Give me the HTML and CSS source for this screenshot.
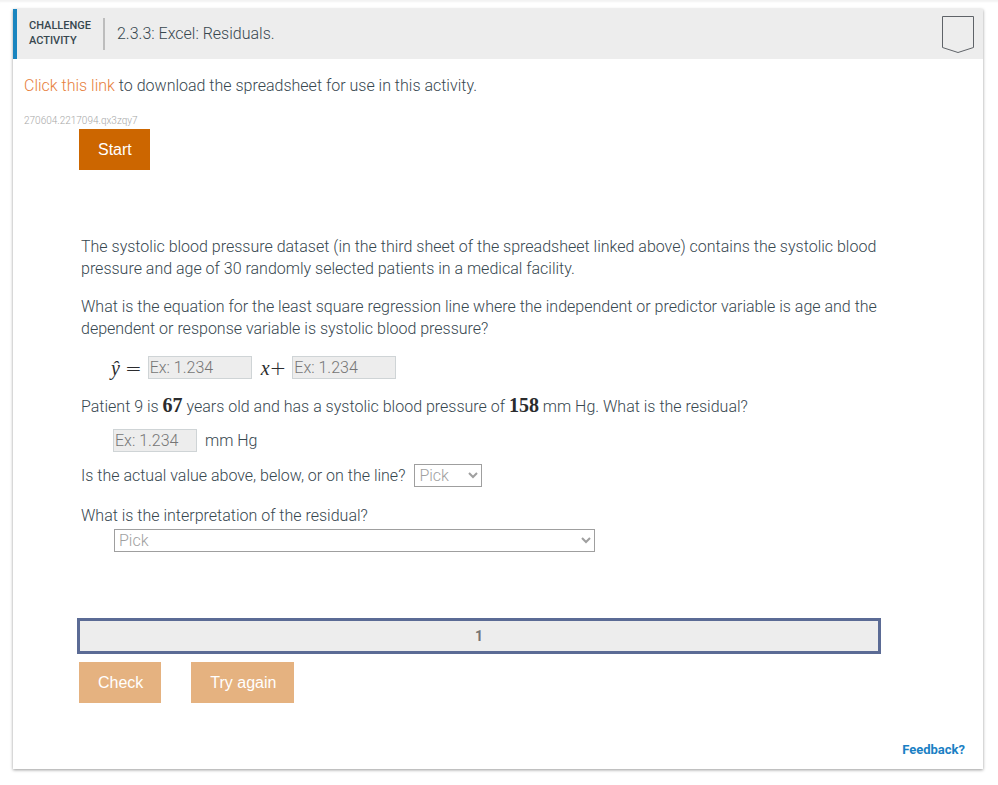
FILE: index.html
```html
<!DOCTYPE html>
<html lang="en">
<head>
    <meta charset="UTF-8">
    <meta name="viewport" content="width=device-width, initial-scale=1.0">
    <title>2.3.3: Excel: Residuals.</title>
    <link rel="stylesheet" href="styles.css">
</head>
<body>

<main class="activity">
    <header class="activity-header">
        <div class="activity-type">Challenge<br>activity</div>
        <h1 class="activity-title">2.3.3: Excel: Residuals.</h1>
        <svg class="chevron" width="34" height="38" viewBox="0 0 34 38" role="img" aria-label="Not completed">
            <path d="M1.5 1.5H32.5V32.5L17 37.5L1.5 32.5Z" fill="none" stroke="#5f6368" stroke-width="1"/>
        </svg>
    </header>

    <div class="activity-body">
        <p class="intro"><a href="#" class="download-link">Click this link</a> to download the spreadsheet for use in this activity.</p>
        <div class="activity-id">270604.2217094.qx3zqy7</div>

        <div class="tool">
            <div class="button-row">
                <button class="button" type="button">Start</button>
            </div>

            <div class="question">
                <p class="paragraph">The systolic blood pressure dataset (in the third sheet of the spreadsheet linked above) contains the systolic blood pressure and age of 30 randomly selected patients in a medical facility.</p>
                <p class="paragraph">What is the equation for the least square regression line where the independent or predictor variable is age and the dependent or response variable is systolic blood pressure?</p>

                <div class="row equation">
                    <label class="math" for="slope"><i>ŷ</i> <span class="operator">=</span></label>
                    <input class="answer" id="slope" type="text" placeholder="Ex: 1.234" disabled>
                    <label class="math term" for="intercept"><i>x</i><span class="operator">+</span></label>
                    <input class="answer" id="intercept" type="text" placeholder="Ex: 1.234" disabled>
                </div>

                <label class="prompt" for="residual">Patient 9 is <span class="math number">67</span> years old and has a systolic blood pressure of <span class="math number">158</span> mm Hg. What is the residual?</label>
                <div class="row residual">
                    <input class="answer short" id="residual" type="text" placeholder="Ex: 1.234" disabled>
                    <span>mm Hg</span>
                </div>

                <div class="row position">
                    <label for="position">Is the actual value above, below, or on the line?</label>
                    <select class="pick" id="position" disabled>
                        <option>Pick</option>
                    </select>
                </div>

                <label class="prompt" for="meaning">What is the interpretation of the residual?</label>
                <select class="pick wide" id="meaning" disabled>
                    <option>Pick</option>
                </select>
            </div>

            <div class="level">1</div>
            <div class="button-row">
                <button class="button" type="button" disabled>Check</button>
                <button class="button" type="button" disabled>Try again</button>
            </div>
        </div>

        <div class="footer">
            <a href="#" class="feedback">Feedback?</a>
        </div>
    </div>
</main>

</body>
</html>
```

FILE: styles.css
```css
* {
    box-sizing: border-box;
}

body {
    margin: 0;
    padding: 9px 15px 16px 13px;
    background: #fff;
    box-shadow: inset 0 3px 2px -1px #f3f3f3;
    color: #37474f;
    font-family: Roboto, sans-serif;
    font-size: 16px;
    font-weight: 300;
    line-height: 22px;
}

a {
    text-decoration: none;
}

.activity {
    background: #fff;
    box-shadow: 0 1px 3px rgba(0, 0, 0, 0.4);
}

.activity-header {
    display: flex;
    align-items: center;
    height: 50px;
    padding-right: 8px;
    border-left: 4px solid #1a85bf;
    background: #ededed;
}

.activity-type {
    padding: 0 12px 2px;
    border-right: 2px solid #bdbdbd;
    font-size: 11px;
    font-weight: 500;
    line-height: 15px;
    text-transform: uppercase;
}

.activity-title {
    flex: 1;
    margin: 0 12px;
    font-size: 16px;
    font-weight: 300;
}

.activity-body {
    padding: 16px 18px 8px 11px;
}

.intro {
    margin: 0 0 16px;
}

.download-link {
    color: #e7803c;
}

.activity-id {
    color: #a8a8a8;
    font-size: 10px;
    line-height: 16px;
}

.tool {
    max-width: 804px;
    margin-left: 53px;
}

.button-row {
    display: flex;
    gap: 30px;
    padding-left: 2px;
}

.button {
    height: 41px;
    padding: 0 18px 0 19px;
    border: none;
    background: #cc6600;
    color: #fff;
    font-family: "Liberation Sans", Arial, sans-serif;
    font-size: 16px;
    cursor: pointer;
}

.button:disabled {
    background: #e5b280;
    cursor: default;
}

.question {
    padding: 66px 4px;
}

.paragraph {
    margin: 0 0 16px;
}

.row {
    display: flex;
    align-items: center;
}

.equation {
    margin-bottom: 16px;
    padding-left: 30px;
}

.math {
    color: #2b2c2e;
    font-family: "Liberation Serif", serif;
    font-size: 20px;
    font-weight: 400;
    line-height: 20px;
}

.math.number {
    font-weight: 700;
}

.equation .math {
    margin-right: 6px;
}

.equation .term {
    margin-left: 9px;
}

.operator {
    font-family: "DejaVu Sans", sans-serif;
    font-weight: 200;
}

.answer {
    width: 104px;
    height: 23px;
    padding: 0 1px;
    border: 1px solid #cfd4d6;
    background: #ededed;
    font: inherit;
}

.answer::placeholder {
    color: #757575;
}

.short {
    width: 84px;
}

.prompt {
    display: block;
}

.residual {
    gap: 8px;
    margin: 11px 0 12px;
    padding-left: 32px;
}

.position {
    gap: 9px;
    margin-bottom: 18px;
}

.pick {
    width: 68px;
    height: 23px;
    padding: 0;
    border: 1px solid #777;
    border-radius: 0;
    background: #fff;
    color: #777;
    font: inherit;
    opacity: 0.7;
}

.wide {
    display: block;
    width: 481px;
    margin: 2px 0 0 33px;
}

.level {
    margin-bottom: 8px;
    border: 3px solid #5b6b95;
    background: #ededed;
    color: #757575;
    font-size: 14px;
    font-weight: 700;
    line-height: 30px;
    text-align: center;
}

.footer {
    margin-top: 35px;
    text-align: right;
}

.feedback {
    color: #1a7fc4;
    font-size: 13px;
    font-weight: 700;
}
```
